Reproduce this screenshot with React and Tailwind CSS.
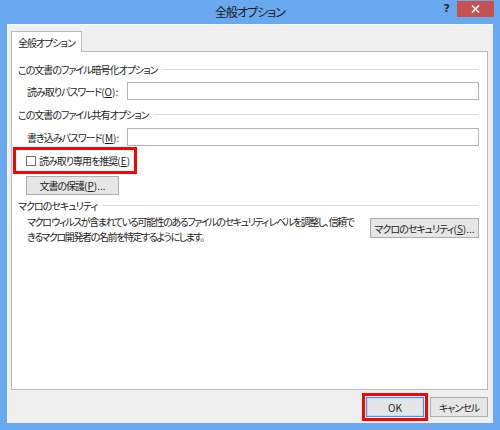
import React from "react";

const font = {
  fontFamily: '"Noto Sans CJK JP", "Noto Sans", sans-serif',
};

const B = "text-[10px] text-[#1e1e1e] [font-feature-settings:'palt'] whitespace-nowrap";
const T = B + " tracking-[-1px]";

function M({ k, tail = "" }) {
  return (
    <span className="tracking-[0px]">
      (<span className="underline">{k}</span>){tail}
    </span>
  );
}

function Heading({ children }) {
  return (
    <div className="flex items-center h-[14px] pl-[6px] pr-[8px]">
      <span className={T + " leading-[14px]"}>{children}</span>
      <div className="flex-1 h-px bg-[#dcdcdc] ml-[5px] mt-[-1px]" />
    </div>
  );
}

function Field({ label, u, mt }) {
  return (
    <div className={"flex items-center pr-[8px] " + mt}>
      <div className={"w-[115px] pl-[15px] " + T}>
        {label}
        <M k={u} tail=":" />
      </div>
      <div className="flex-1 h-[18px] border border-[#b5b5b5] bg-white" />
    </div>
  );
}

function Btn({ children, className = "" }) {
  return (
    <div
      className={
        "flex items-center justify-center h-[19px] border border-[#adadad] bg-[#e6e6e6] " +
        T +
        " " +
        className
      }
    >
      {children}
    </div>
  );
}

export default function App() {
  return (
    <div
      style={font}
      className="w-[500px] h-[430px] bg-[#68a9ef] flex flex-col overflow-hidden"
    >
      {/* Title bar */}
      <div className="h-[24px] grid grid-cols-[1fr_auto_1fr] items-start">
        <div />
        <div className="pt-[4px] text-[12px] leading-[16px] text-[#1a1a1a] tracking-[-1px] [font-feature-settings:'palt'] whitespace-nowrap">
          全般オプション
        </div>
        <div className="flex justify-end items-start pr-[6px]">
          <div className="mt-[1px] mr-[7px] text-[11px] leading-[15px] font-bold text-[#2a2a2a] font-['DejaVu_Sans']">
            ?
          </div>
          <div className="w-[37px] h-[16px] mt-[1px] bg-[#c75050] flex items-center justify-center">
            <svg width="9" height="8" viewBox="0 0 9 8">
              <path d="M1 0.5 L8 7.5 M8 0.5 L1 7.5" stroke="#fff" strokeWidth="1.6" />
            </svg>
          </div>
        </div>
      </div>

      {/* Body */}
      <div className="flex-1 mx-[7px] mb-[7px] bg-[#f0f0f0] border-l border-t border-[#f8f8f8] flex flex-col pl-[3px] pr-[5px] pt-[6px]">
        {/* Tab */}
        <div className="flex">
          <div className={"w-[71px] h-[21px] bg-white border border-b-0 border-[#b9b9b9] -mb-px relative z-10 flex items-center pl-[6px] " + T}>
            全般オプション
          </div>
        </div>
        {/* Panel */}
        <div className="h-[339px] bg-white border border-[#b9b9b9] flex flex-col">
          <div className="mt-[11px]">
            <Heading>この文書のファイル暗号化オプション</Heading>
          </div>
          <Field label="読み取りパスワード" u="O" mt="mt-[5px]" />
          <div className="mt-[8px]">
            <Heading>この文書のファイル共有オプション</Heading>
          </div>
          <Field label="書き込みパスワード" u="M" mt="mt-[6px]" />
          <div className="flex mt-[1px]">
            <div className="ml-px h-[27px] border-[3px] border-[#ff0000] flex items-center pl-[10px] pr-[4px]">
              <div className="w-[10px] h-[10px] border border-[#707070] bg-white mr-[3px]" />
              <span className={T}>
                読み取り専用を推奨
                <M k="E" />
              </span>
            </div>
          </div>
          <div className="flex mt-[2px] pl-[14px]">
            <Btn className="w-[93px]">
              文書の保護
              <M k="P" tail="..." />
            </Btn>
          </div>
          <div className="mt-[4px]">
            <Heading>マクロのセキュリティ</Heading>
          </div>
          <div className="flex items-start pl-[15px] pr-[8px]">
            <div className={"flex-1 min-w-0 mt-[1px] leading-[15px] tracking-[-1.4px] " + B}>
              マクロ ウィルスが含まれている可能性のあるファイルのセキュリティ レベルを調整し、信頼で
              <br />
              きるマクロ開発者の名前を特定するようにします。
            </div>
            <Btn className="w-[109px] h-[20px] mt-[5px] ml-[8px] shrink-0">
              マクロのセキュリティ
              <M k="S" tail="..." />
            </Btn>
          </div>
        </div>
        {/* Bottom buttons */}
        <div className="flex justify-end items-center mt-[3px]">
          <div className="border-[3px] border-[#ff0000] p-px">
            <div className="w-[58px] h-[20px] border border-[#3399ff] bg-[#e5e5e5] flex items-center justify-center text-[10px] text-[#1e1e1e]">
              <div className="w-full h-full border border-[#bfdcfb] flex items-center justify-center">OK</div>
            </div>
          </div>
          <Btn className="w-[58px] h-[20px] ml-[2px]">キャンセル</Btn>
        </div>
      </div>
    </div>
  );
}
